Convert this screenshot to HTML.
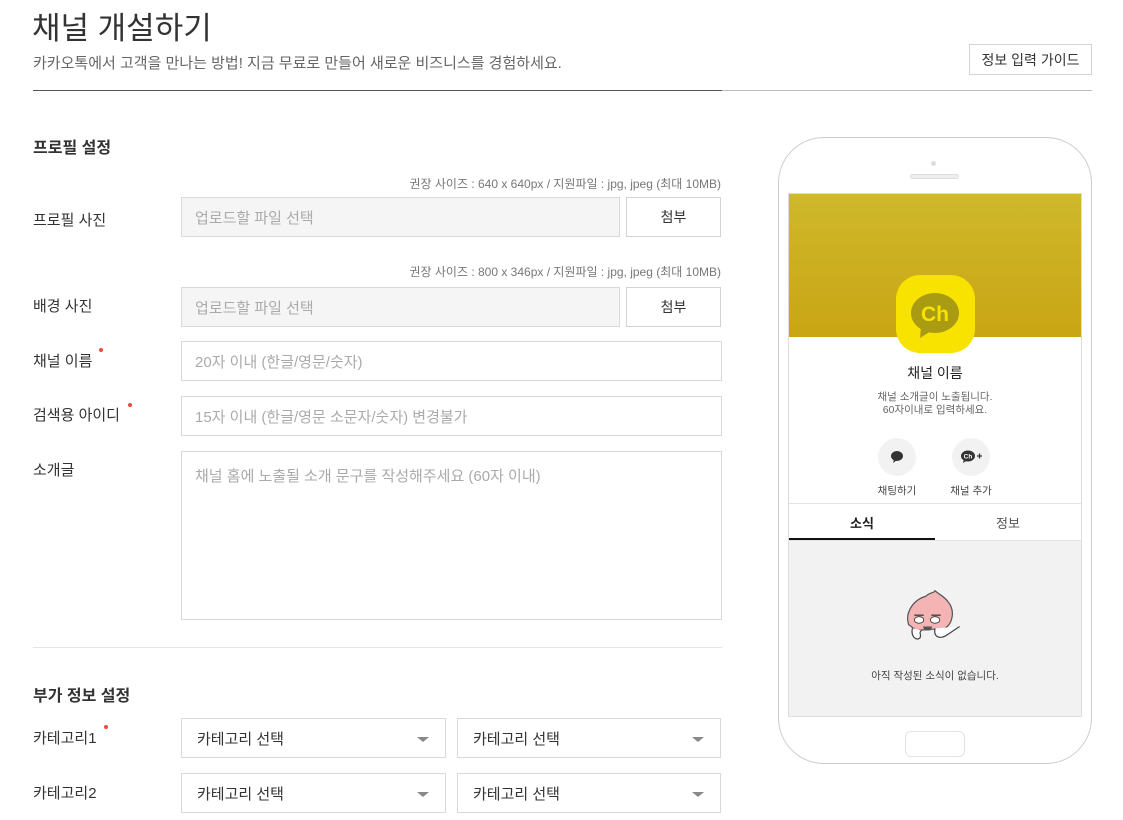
<!DOCTYPE html>
<html><head><meta charset="utf-8"><style>
*{margin:0;padding:0;box-sizing:border-box}
body{width:1123px;height:820px;background:#fff;font-family:"Liberation Sans","Noto Sans CJK KR",sans-serif;color:#333;position:relative;overflow:hidden}
.a{position:absolute}
.lbl{position:absolute;left:33px;font-size:15px;color:#333;line-height:20px}
.inp{position:absolute;border:1px solid #d9d9d9;background:#fff;font-size:15px;color:#aaa;padding-left:13px;display:flex;align-items:center}
.inp.f{background:#f5f5f5}
.btn{position:absolute;border:1px solid #d3d3d3;background:#fff;font-size:14px;color:#333;display:flex;align-items:center;justify-content:center}
.hint{position:absolute;right:402px;font-size:12px;color:#777}
.dot{position:absolute;width:4px;height:4px;border-radius:50%;background:#f04b3b}
.sel{position:absolute;border:1px solid #d9d9d9;font-size:15px;color:#333;padding-left:15px;display:flex;align-items:center;height:40px}
.sel:after{content:"";position:absolute;right:16px;top:18px;border-left:6px solid transparent;border-right:6px solid transparent;border-top:5px solid #888}
</style></head><body>
<div class="a" style="left:32px;top:7px;font-size:31px;color:#333;line-height:44px">채널 개설하기</div>
<div class="a" style="left:33px;top:54px;font-size:15px;color:#666;line-height:20px">카카오톡에서 고객을 만나는 방법! 지금 무료로 만들어 새로운 비즈니스를 경험하세요.</div>
<div class="btn" style="left:969px;top:44px;width:123px;height:31px;font-size:14px">정보 입력 가이드</div>
<div class="a" style="left:33px;top:90px;width:1059px;height:1px;background:#bbb"></div>
<div class="a" style="left:33px;top:90px;width:689px;height:1px;background:#555"></div>

<div class="a" style="left:33px;top:138px;font-size:16px;font-weight:bold;line-height:22px">프로필 설정</div>
<div class="hint" style="top:175px">권장 사이즈 : 640 x 640px / 지원파일 : jpg, jpeg (최대 10MB)</div>
<div class="lbl" style="top:211px">프로필 사진</div>
<div class="inp f" style="left:181px;top:197px;width:439px;height:40px">업로드할 파일 선택</div>
<div class="btn" style="left:626px;top:197px;width:95px;height:40px">첨부</div>

<div class="hint" style="top:263px">권장 사이즈 : 800 x 346px / 지원파일 : jpg, jpeg (최대 10MB)</div>
<div class="lbl" style="top:297px">배경 사진</div>
<div class="inp f" style="left:181px;top:287px;width:439px;height:40px">업로드할 파일 선택</div>
<div class="btn" style="left:626px;top:287px;width:95px;height:40px">첨부</div>

<div class="lbl" style="top:352px">채널 이름</div><div class="dot" style="left:99px;top:348px"></div>
<div class="inp" style="left:181px;top:341px;width:541px;height:40px">20자 이내 (한글/영문/숫자)</div>
<div class="lbl" style="top:406px">검색용 아이디</div><div class="dot" style="left:128px;top:403px"></div>
<div class="inp" style="left:181px;top:396px;width:541px;height:40px">15자 이내 (한글/영문 소문자/숫자) 변경불가</div>
<div class="lbl" style="top:461px">소개글</div>
<div class="inp" style="left:181px;top:451px;width:541px;height:169px;align-items:flex-start;padding-top:13px">채널 홈에 노출될 소개 문구를 작성해주세요 (60자 이내)</div>
<div class="a" style="left:33px;top:647px;width:689px;height:1px;background:#e5e5e5"></div>

<div class="a" style="left:33px;top:686px;font-size:16px;font-weight:bold;line-height:22px">부가 정보 설정</div>
<div class="lbl" style="top:729px">카테고리1</div><div class="dot" style="left:104px;top:725px"></div>
<div class="sel" style="left:181px;top:718px;width:265px">카테고리 선택</div>
<div class="sel" style="left:457px;top:718px;width:264px">카테고리 선택</div>
<div class="lbl" style="top:784px">카테고리2</div>
<div class="sel" style="left:181px;top:773px;width:265px">카테고리 선택</div>
<div class="sel" style="left:457px;top:773px;width:264px">카테고리 선택</div>

<!-- phone -->
<div class="a" style="left:778px;top:137px;width:314px;height:627px;border:1px solid #ccc;border-radius:46px"></div>
<div class="a" style="left:931px;top:161px;width:5px;height:5px;border-radius:50%;background:#ddd"></div>
<div class="a" style="left:910px;top:174px;width:49px;height:5px;border-radius:3px;background:#eee;border:1px solid #ddd"></div>
<div class="a" style="left:788px;top:193px;width:294px;height:524px;border:1px solid #ddd;overflow:hidden">
 <div class="a" style="left:0;top:0;width:292px;height:143px;background:linear-gradient(#cfb82c,#c9a513)"></div>
 <div class="a" style="left:107px;top:81px;width:79px;height:78px;border-radius:24px;background:#f7e200"></div>
 <svg class="a" style="left:107px;top:81px" width="79" height="78" viewBox="0 0 79 78"><ellipse cx="39" cy="38" rx="24" ry="20" fill="#a99b12"/><path d="M25 52 L24 63 L35 56Z" fill="#a99b12"/><text x="39" y="46" text-anchor="middle" font-family="Liberation Sans" font-weight="bold" font-size="21" fill="#f7e200">Ch</text></svg>
 <div class="a" style="left:0;top:169px;width:292px;text-align:center;font-size:14px;color:#222">채널 이름</div>
 <div class="a" style="left:0;top:197px;width:292px;text-align:center;font-size:10.5px;color:#666;line-height:13px">채널 소개글이 노출됩니다.<br>60자이내로 입력하세요.</div>
 <div class="a" style="left:89px;top:244px;width:38px;height:38px;border-radius:50%;background:#f2f2f2"></div>
 <svg class="a" style="left:101px;top:256px" width="14" height="14" viewBox="0 0 14 14"><ellipse cx="7" cy="6" rx="6" ry="5" fill="#333"/><path d="M4 9 L3 13 L7 10Z" fill="#333"/></svg>
 <div class="a" style="left:163px;top:244px;width:38px;height:38px;border-radius:50%;background:#f2f2f2"></div>
 <svg class="a" style="left:171px;top:256px" width="24" height="14" viewBox="0 0 24 14"><ellipse cx="8" cy="6" rx="7" ry="5.5" fill="#333"/><path d="M4 9 L3 13 L8 10Z" fill="#333"/><text x="8" y="8.5" text-anchor="middle" font-size="6.5" font-weight="bold" fill="#fff" font-family="Liberation Sans">Ch</text><path d="M17 6h5M19.5 3.5v5" stroke="#333" stroke-width="1.3"/></svg>
 <div class="a" style="left:68px;top:289px;width:80px;text-align:center;font-size:10.5px;color:#444">채팅하기</div>
 <div class="a" style="left:142px;top:289px;width:80px;text-align:center;font-size:10.5px;color:#444">채널 추가</div>
 <div class="a" style="left:0;top:309px;width:292px;height:1px;background:#e3e3e3"></div>
 <div class="a" style="left:0;top:319px;width:146px;text-align:center;font-size:13px;font-weight:bold;color:#222">소식</div>
 <div class="a" style="left:146px;top:319px;width:146px;text-align:center;font-size:13px;color:#555">정보</div>
 <div class="a" style="left:0;top:346px;width:292px;height:178px;background:#f2f2f2;border-top:1px solid #e3e3e3"></div>
 <div class="a" style="left:0;top:344px;width:146px;height:2px;background:#111"></div>
 <svg class="a" style="left:114px;top:396px" width="66" height="58" viewBox="0 0 70 60"><path d="M6 36 C2 24 10 10 24 6 C28 2 34 2 34 0 C38 4 44 6 48 12 C56 22 52 36 44 40 L14 42 Z" fill="#f5b4b4" stroke="#555" stroke-width="1.3"/><path d="M12 26 h10 M30 26 h10" stroke="#444" stroke-width="1.5"/><ellipse cx="17" cy="31" rx="5" ry="3.5" fill="#fff" stroke="#444"/><ellipse cx="34" cy="31" rx="5" ry="3.5" fill="#fff" stroke="#444"/><path d="M21 38 h10 l-2 4 h-6z" fill="#555"/><path d="M10 40 c-2 8 4 14 8 10 c2-3-2-6 2-8" fill="#fff" stroke="#444" stroke-width="1.3"/><path d="M34 40 c-2 10 6 12 14 6 l12-8" fill="#fff" stroke="#444" stroke-width="1.3"/></svg>
 <div class="a" style="left:0;top:474px;width:292px;text-align:center;font-size:10.5px;color:#444">아직 작성된 소식이 없습니다.</div>
</div>
<div class="a" style="left:905px;top:731px;width:60px;height:26px;border:1px solid #e3e3e3;border-radius:6px"></div>
</body></html>
